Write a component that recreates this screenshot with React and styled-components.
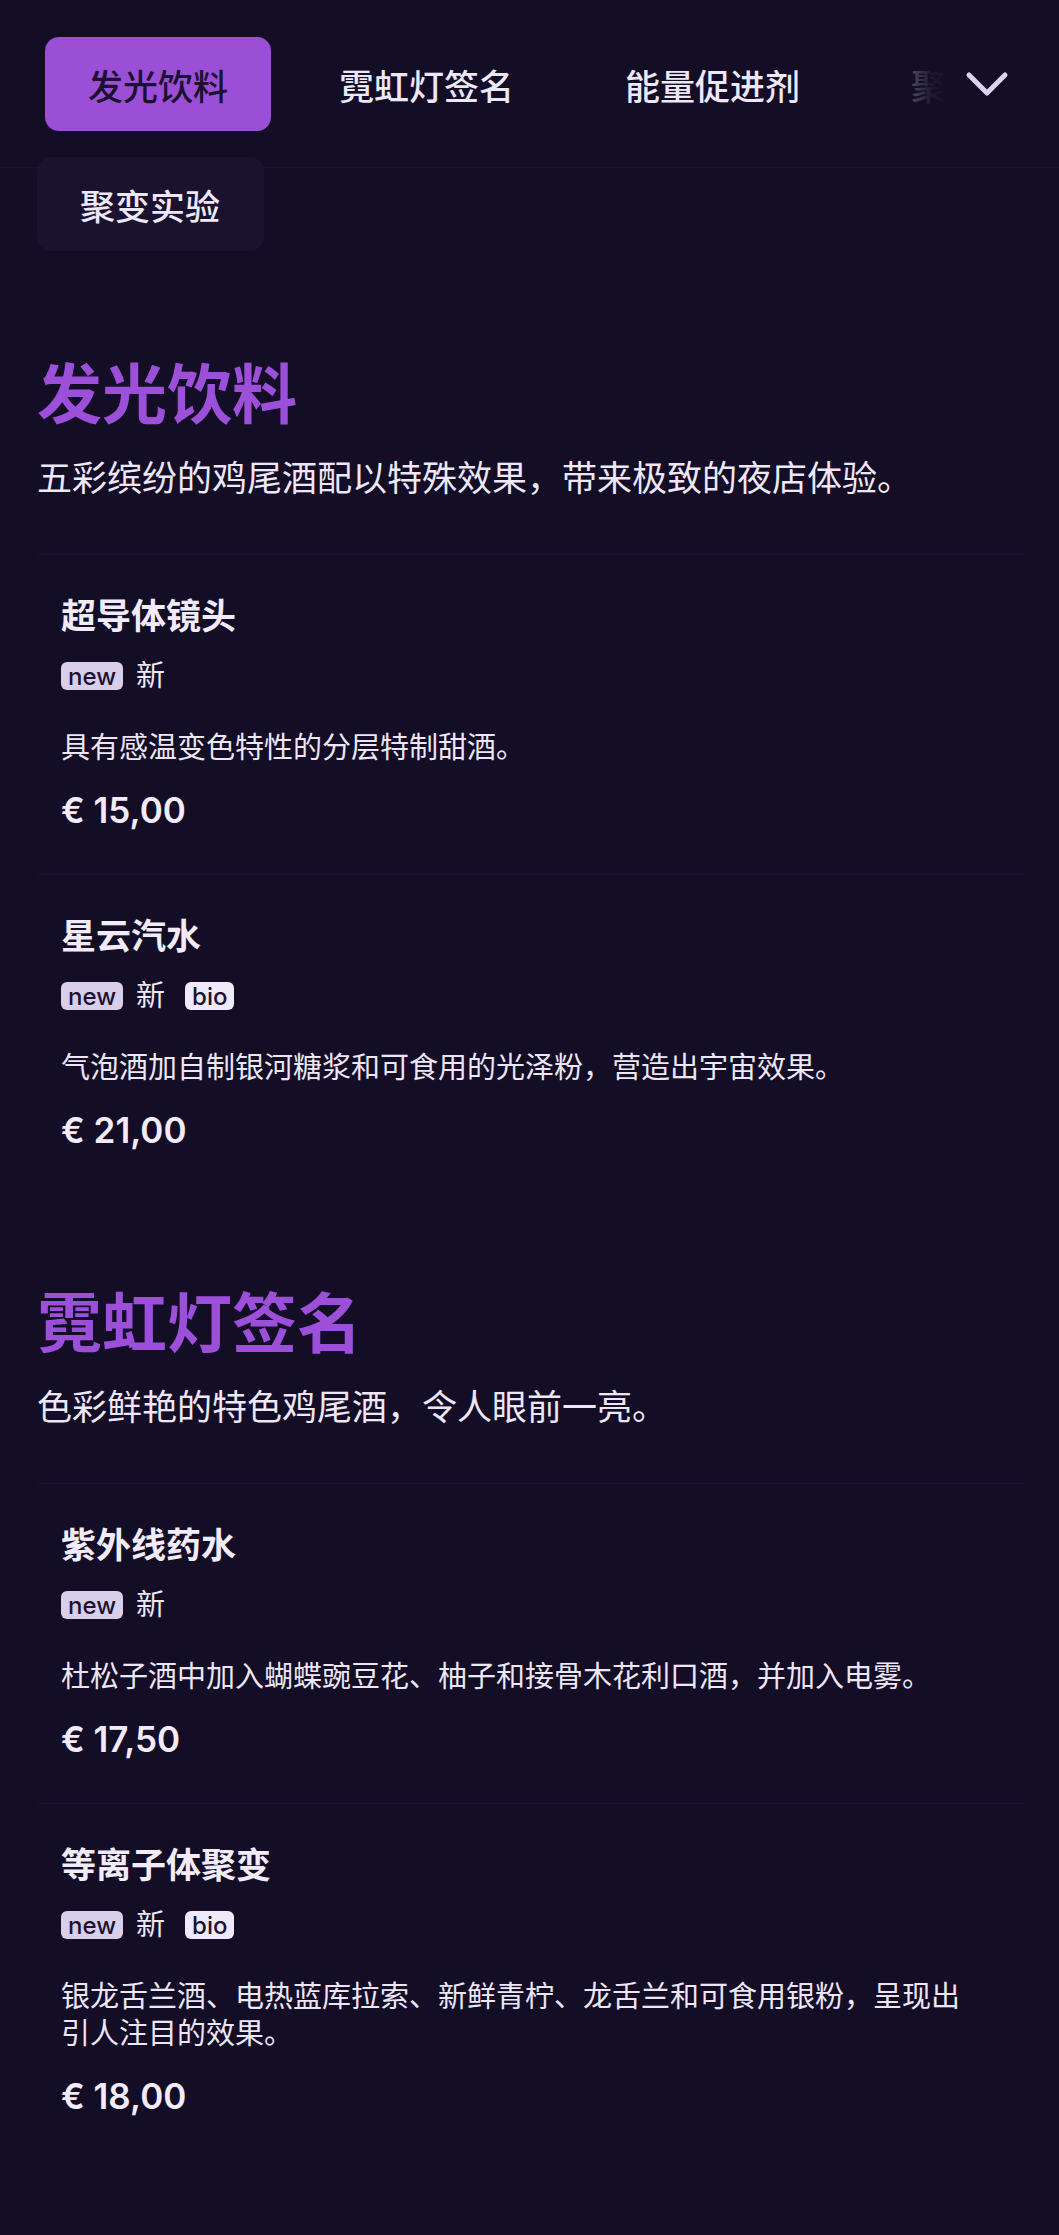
import styled, { createGlobalStyle } from "styled-components";

const GlobalStyle = createGlobalStyle`
  html, body {
    margin: 0;
    padding: 0;
    background: #140d26;
  }
  body {
    font-family: Inter, "Noto Sans CJK SC", sans-serif;
    color: #ede7f7;
  }
`;

const tabs = ["发光饮料", "霓虹灯签名", "能量促进剂", "聚变实验"];

const sections = [
  {
    title: "发光饮料",
    text: "五彩缤纷的鸡尾酒配以特殊效果，带来极致的夜店体验。",
    items: [
      {
        name: "超导体镜头",
        bio: false,
        text: "具有感温变色特性的分层特制甜酒。",
        price: "€ 15,00",
      },
      {
        name: "星云汽水",
        bio: true,
        text: "气泡酒加自制银河糖浆和可食用的光泽粉，营造出宇宙效果。",
        price: "€ 21,00",
      },
    ],
  },
  {
    title: "霓虹灯签名",
    text: "色彩鲜艳的特色鸡尾酒，令人眼前一亮。",
    items: [
      {
        name: "紫外线药水",
        bio: false,
        text: "杜松子酒中加入蝴蝶豌豆花、柚子和接骨木花利口酒，并加入电雾。",
        price: "€ 17,50",
      },
      {
        name: "等离子体聚变",
        bio: true,
        text: "银龙舌兰酒、电热蓝库拉索、新鲜青柠、龙舌兰和可食用银粉，呈现出引人注目的效果。",
        price: "€ 18,00",
      },
    ],
  },
];

const App = () => {
  return (
    <>
      <GlobalStyle />
      <Header>
        <TabRow>
          {tabs.map((tab, i) => (
            <Tab key={tab} $active={i === 0}>
              {tab}
            </Tab>
          ))}
        </TabRow>
        <Fade />
        <MoreButton aria-label="more">
          <svg width="44" height="26" viewBox="0 0 44 26">
            <polyline
              points="4,4 22,22 40,4"
              fill="none"
              stroke="#ddd3ee"
              strokeWidth="5"
              strokeLinecap="round"
              strokeLinejoin="round"
            />
          </svg>
        </MoreButton>
      </Header>
      <OverflowTab>聚变实验</OverflowTab>
      <Main>
        {sections.map((section) => (
          <Section key={section.title}>
            <SectionTitle>{section.title}</SectionTitle>
            <SectionText>{section.text}</SectionText>
            <ItemList>
              {section.items.map((item) => (
                <Item key={item.name}>
                  <ItemName>{item.name}</ItemName>
                  <Tags>
                    <Badge>new</Badge>
                    <TagLabel>新</TagLabel>
                    {item.bio && <Badge $bright>bio</Badge>}
                  </Tags>
                  <ItemText>{item.text}</ItemText>
                  <Price>{item.price}</Price>
                </Item>
              ))}
            </ItemList>
          </Section>
        ))}
      </Main>
    </>
  );
};

const Header = styled.header`
  position: relative;
  height: 168px;
  border-bottom: 1px solid #1b1335;
  overflow: hidden;
  box-sizing: border-box;
`;

const TabRow = styled.nav`
  display: flex;
  gap: 25px;
  padding: 37px 0 0 45px;
  white-space: nowrap;
`;

const Tab = styled.div`
  flex: none;
  height: 94px;
  display: flex;
  align-items: center;
  padding: 0 43px;
  border-radius: 14px;
  font-size: 35px;
  font-weight: 500;
  background: ${(p) => (p.$active ? "#9b4fd6" : "transparent")};
  color: ${(p) => (p.$active ? "#1b1030" : "#ede7f7")};
`;

const Fade = styled.div`
  position: absolute;
  top: 0;
  right: 0;
  bottom: 0;
  width: 236px;
  background: linear-gradient(
    to right,
    rgba(20, 13, 38, 0) 0%,
    rgba(20, 13, 38, 0.75) 38%,
    rgba(20, 13, 38, 0.95) 46%,
    #140d26 54%
  );
`;

const MoreButton = styled.div`
  position: absolute;
  top: 71px;
  left: 965px;
  width: 44px;
  height: 26px;
  display: flex;
`;

const OverflowTab = styled.div`
  position: relative;
  margin: -11px 0 0 37px;
  width: 227px;
  height: 94px;
  box-sizing: border-box;
  display: flex;
  align-items: center;
  padding: 0 43px;
  border-radius: 14px;
  background: #1a122f;
  font-size: 35px;
  font-weight: 500;
  color: #ede7f7;
`;

const Main = styled.main`
  display: flex;
  flex-direction: column;
  gap: 91px;
  padding: 105px 36px 80px 37px;
`;

const Section = styled.section`
  display: flex;
  flex-direction: column;
`;

const SectionTitle = styled.h2`
  margin: 0;
  font-size: 65px;
  line-height: 78px;
  font-weight: 700;
  color: #9c4fd9;
`;

const SectionText = styled.p`
  margin: 21px 0 0;
  font-size: 35px;
  line-height: 46px;
  color: #ede7f7;
`;

const ItemList = styled.div`
  margin-top: 53px;
  display: flex;
  flex-direction: column;
`;

const Item = styled.article`
  display: flex;
  flex-direction: column;
  padding: 39px 24px 42px;
  border-top: 1px solid #1a1234;
`;

const ItemName = styled.h3`
  margin: 0;
  font-size: 35px;
  line-height: 45px;
  font-weight: 700;
  color: #f1ebfa;
`;

const Tags = styled.div`
  margin-top: 20px;
  height: 34px;
  display: flex;
  align-items: center;
  gap: 13px;
`;

const Badge = styled.span`
  height: 28px;
  display: inline-flex;
  align-items: center;
  padding: 0 7px;
  border-radius: 6px;
  font-size: 24px;
  font-weight: 500;
  color: #1b1330;
  background: ${(p) => (p.$bright ? "#efe9f9" : "#d9cfea")};
`;

const TagLabel = styled.span`
  margin-right: 7px;
  font-size: 29px;
  line-height: 34px;
  color: #ede7f7;
`;

const ItemText = styled.p`
  margin: 36px 0 0;
  font-size: 29px;
  line-height: 37px;
  color: #ece6f6;
  padding-right: 20px;
`;

const Price = styled.div`
  margin-top: 22px;
  font-size: 35px;
  line-height: 44px;
  font-weight: 600;
  color: #f1ebfa;
`;

export default App;
